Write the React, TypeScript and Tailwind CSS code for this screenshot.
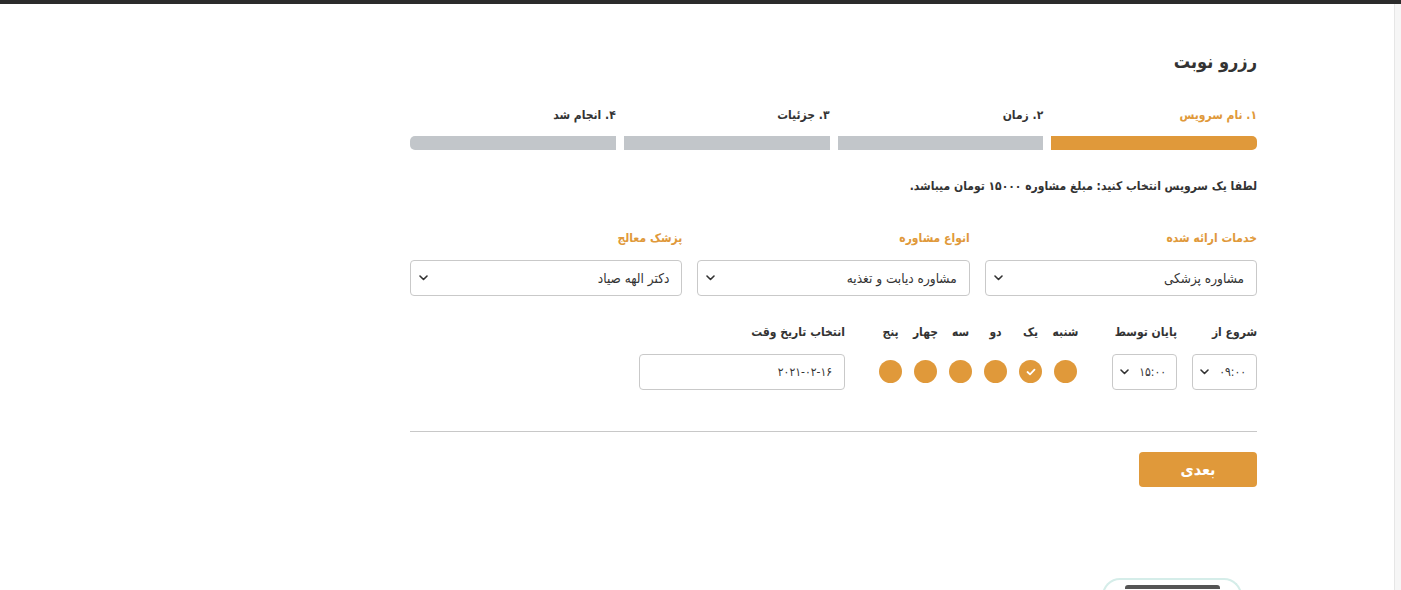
import React from "react";

function Chevron() {
  return (
    <svg width="9" height="6" viewBox="0 0 9 6" fill="none">
      <polyline points="1,1 4.5,4.5 8,1" stroke="#333" strokeWidth="1.6" strokeLinecap="round" strokeLinejoin="round" />
    </svg>
  );
}

function Select({ value, w, small }: { value: string; w: string; small?: boolean }) {
  return (
    <div className={`${w} h-[36px] border border-[#c9c9c9] rounded-[4px] bg-white flex items-center justify-between ${small ? "pr-[10px] pl-[7px]" : "pr-[12px] pl-[8px]"}`}>
      <span className={`${small ? "text-[12px]" : "text-[13.5px]"} text-[#333]`} dir={small ? "ltr" : undefined}>{value}</span>
      <Chevron />
    </div>
  );
}

const steps = [
  { label: "۱. نام سرویس", active: true },
  { label: "۲. زمان", active: false },
  { label: "۳. جزئیات", active: false },
  { label: "۴. انجام شد", active: false },
];

const days = [
  { name: "شنبه", checked: false },
  { name: "یک", checked: true },
  { name: "دو", checked: false },
  { name: "سه", checked: false },
  { name: "چهار", checked: false },
  { name: "پنج", checked: false },
];

export default function App() {
  return (
    <div className="w-[1401px] h-[590px] overflow-hidden bg-white flex flex-col" style={{ fontFamily: '"DejaVu Sans Condensed", "DejaVu Sans", sans-serif' }}>
      <div className="h-[4px] bg-[#2b2b2b] shrink-0" />
      <div className="flex flex-1 min-h-0">
        <div className="flex-1 min-w-0">
          <div dir="rtl" className="w-[847px] ml-[410px] text-[#333]">
            <h1 className="mt-[44px] h-[28px] leading-[28px] text-[18px] font-bold text-[#333]">رزرو نوبت</h1>

            <div className="mt-[29px] grid grid-cols-4 gap-[8px]">
              {steps.map((s, i) => (
                <div key={i} className="flex flex-col">
                  <div className={`h-[20px] leading-[20px] text-[12px] font-bold ${s.active ? "text-[#e0993a]" : "text-[#333]"}`}>{s.label}</div>
                  <div
                    className={`mt-[11px] h-[14px] ${s.active ? "bg-[#e0993a]" : "bg-[#c2c6ca]"} ${i === 0 ? "rounded-r-[5px]" : ""} ${i === 3 ? "rounded-l-[5px]" : ""}`}
                  />
                </div>
              ))}
            </div>

            <p className="mt-[26px] h-[20px] leading-[20px] text-[12px] font-bold text-[#333]">
              لطفا یک سرویس انتخاب کنید: مبلغ مشاوره ۱۵۰۰۰ تومان میباشد.
            </p>

            <div className="mt-[32px] grid grid-cols-3 gap-[15px]">
              {[
                { label: "خدمات ارائه شده", value: "مشاوره پزشکی" },
                { label: "انواع مشاوره", value: "مشاوره دیابت و تغذیه" },
                { label: "پزشک معالج", value: "دکتر الهه صیاد" },
              ].map((c, i) => (
                <div key={i} className="flex flex-col">
                  <div className="h-[20px] leading-[20px] text-[12px] font-bold text-[#e0993a]">{c.label}</div>
                  <div className="mt-[12px]">
                    <Select value={c.value} w="w-full" />
                  </div>
                </div>
              ))}
            </div>

            <div className="mt-[26px] flex items-start">
              <div className="flex flex-col w-[65px]">
                <div className="h-[20px] leading-[20px] text-[12px] font-bold whitespace-nowrap">شروع از</div>
                <div className="mt-[12px]">
                  <Select value="۰۹:۰۰" w="w-[65px]" small />
                </div>
              </div>
              <div className="flex flex-col w-[65px] mr-[15px]">
                <div className="h-[20px] leading-[20px] text-[12px] font-bold whitespace-nowrap">پایان توسط</div>
                <div className="mt-[12px]">
                  <Select value="۱۵:۰۰" w="w-[65px]" small />
                </div>
              </div>
              <div className="flex mr-[35px] gap-[12px]">
                {days.map((d, i) => (
                  <div key={i} className="flex flex-col items-center w-[23px]">
                    <div className="h-[20px] leading-[20px] text-[12px] font-bold whitespace-nowrap">{d.name}</div>
                    <div className="mt-[18px] w-[23px] h-[23px] rounded-full bg-[#e0993a] flex items-center justify-center">
                      {d.checked && (
                        <svg width="10" height="8" viewBox="0 0 10 8" fill="none">
                          <polyline points="1.5,4 4,6.3 8.5,1.7" stroke="#fff" strokeWidth="1.8" strokeLinecap="round" strokeLinejoin="round" />
                        </svg>
                      )}
                    </div>
                  </div>
                ))}
              </div>
              <div className="flex flex-col w-[206px] mr-[34px]">
                <div className="h-[20px] leading-[20px] text-[12px] font-bold whitespace-nowrap">انتخاب تاریخ وقت</div>
                <div className="mt-[12px] h-[36px] border border-[#c9c9c9] rounded-[4px] flex items-center pr-[12px]">
                  <span dir="ltr" className="text-[12px] text-[#333]">۲۰۲۱-۰۲-۱۶</span>
                </div>
              </div>
            </div>

            <div className="mt-[41px] h-px bg-[#c8c8c8]" />

            <button className="mt-[20px] w-[118px] h-[35px] rounded-[4px] bg-[#e0993a] text-white text-[16px] font-bold flex items-center justify-center">
              بعدی
            </button>

            <div className="mt-[91px] mr-[15px] w-[140px] h-[20px] rounded-t-[18px] border-t-2 border-x-2 border-[#d5ede9] flex justify-center pt-[5px]">
              <div className="w-[95px] h-[4px] bg-[#555] rounded-t-[3px]" />
            </div>
          </div>
        </div>
        <div className="w-[7px] shrink-0 bg-[#f6f6f6] border-l border-[#e6e6e6]" />
      </div>
    </div>
  );
}
